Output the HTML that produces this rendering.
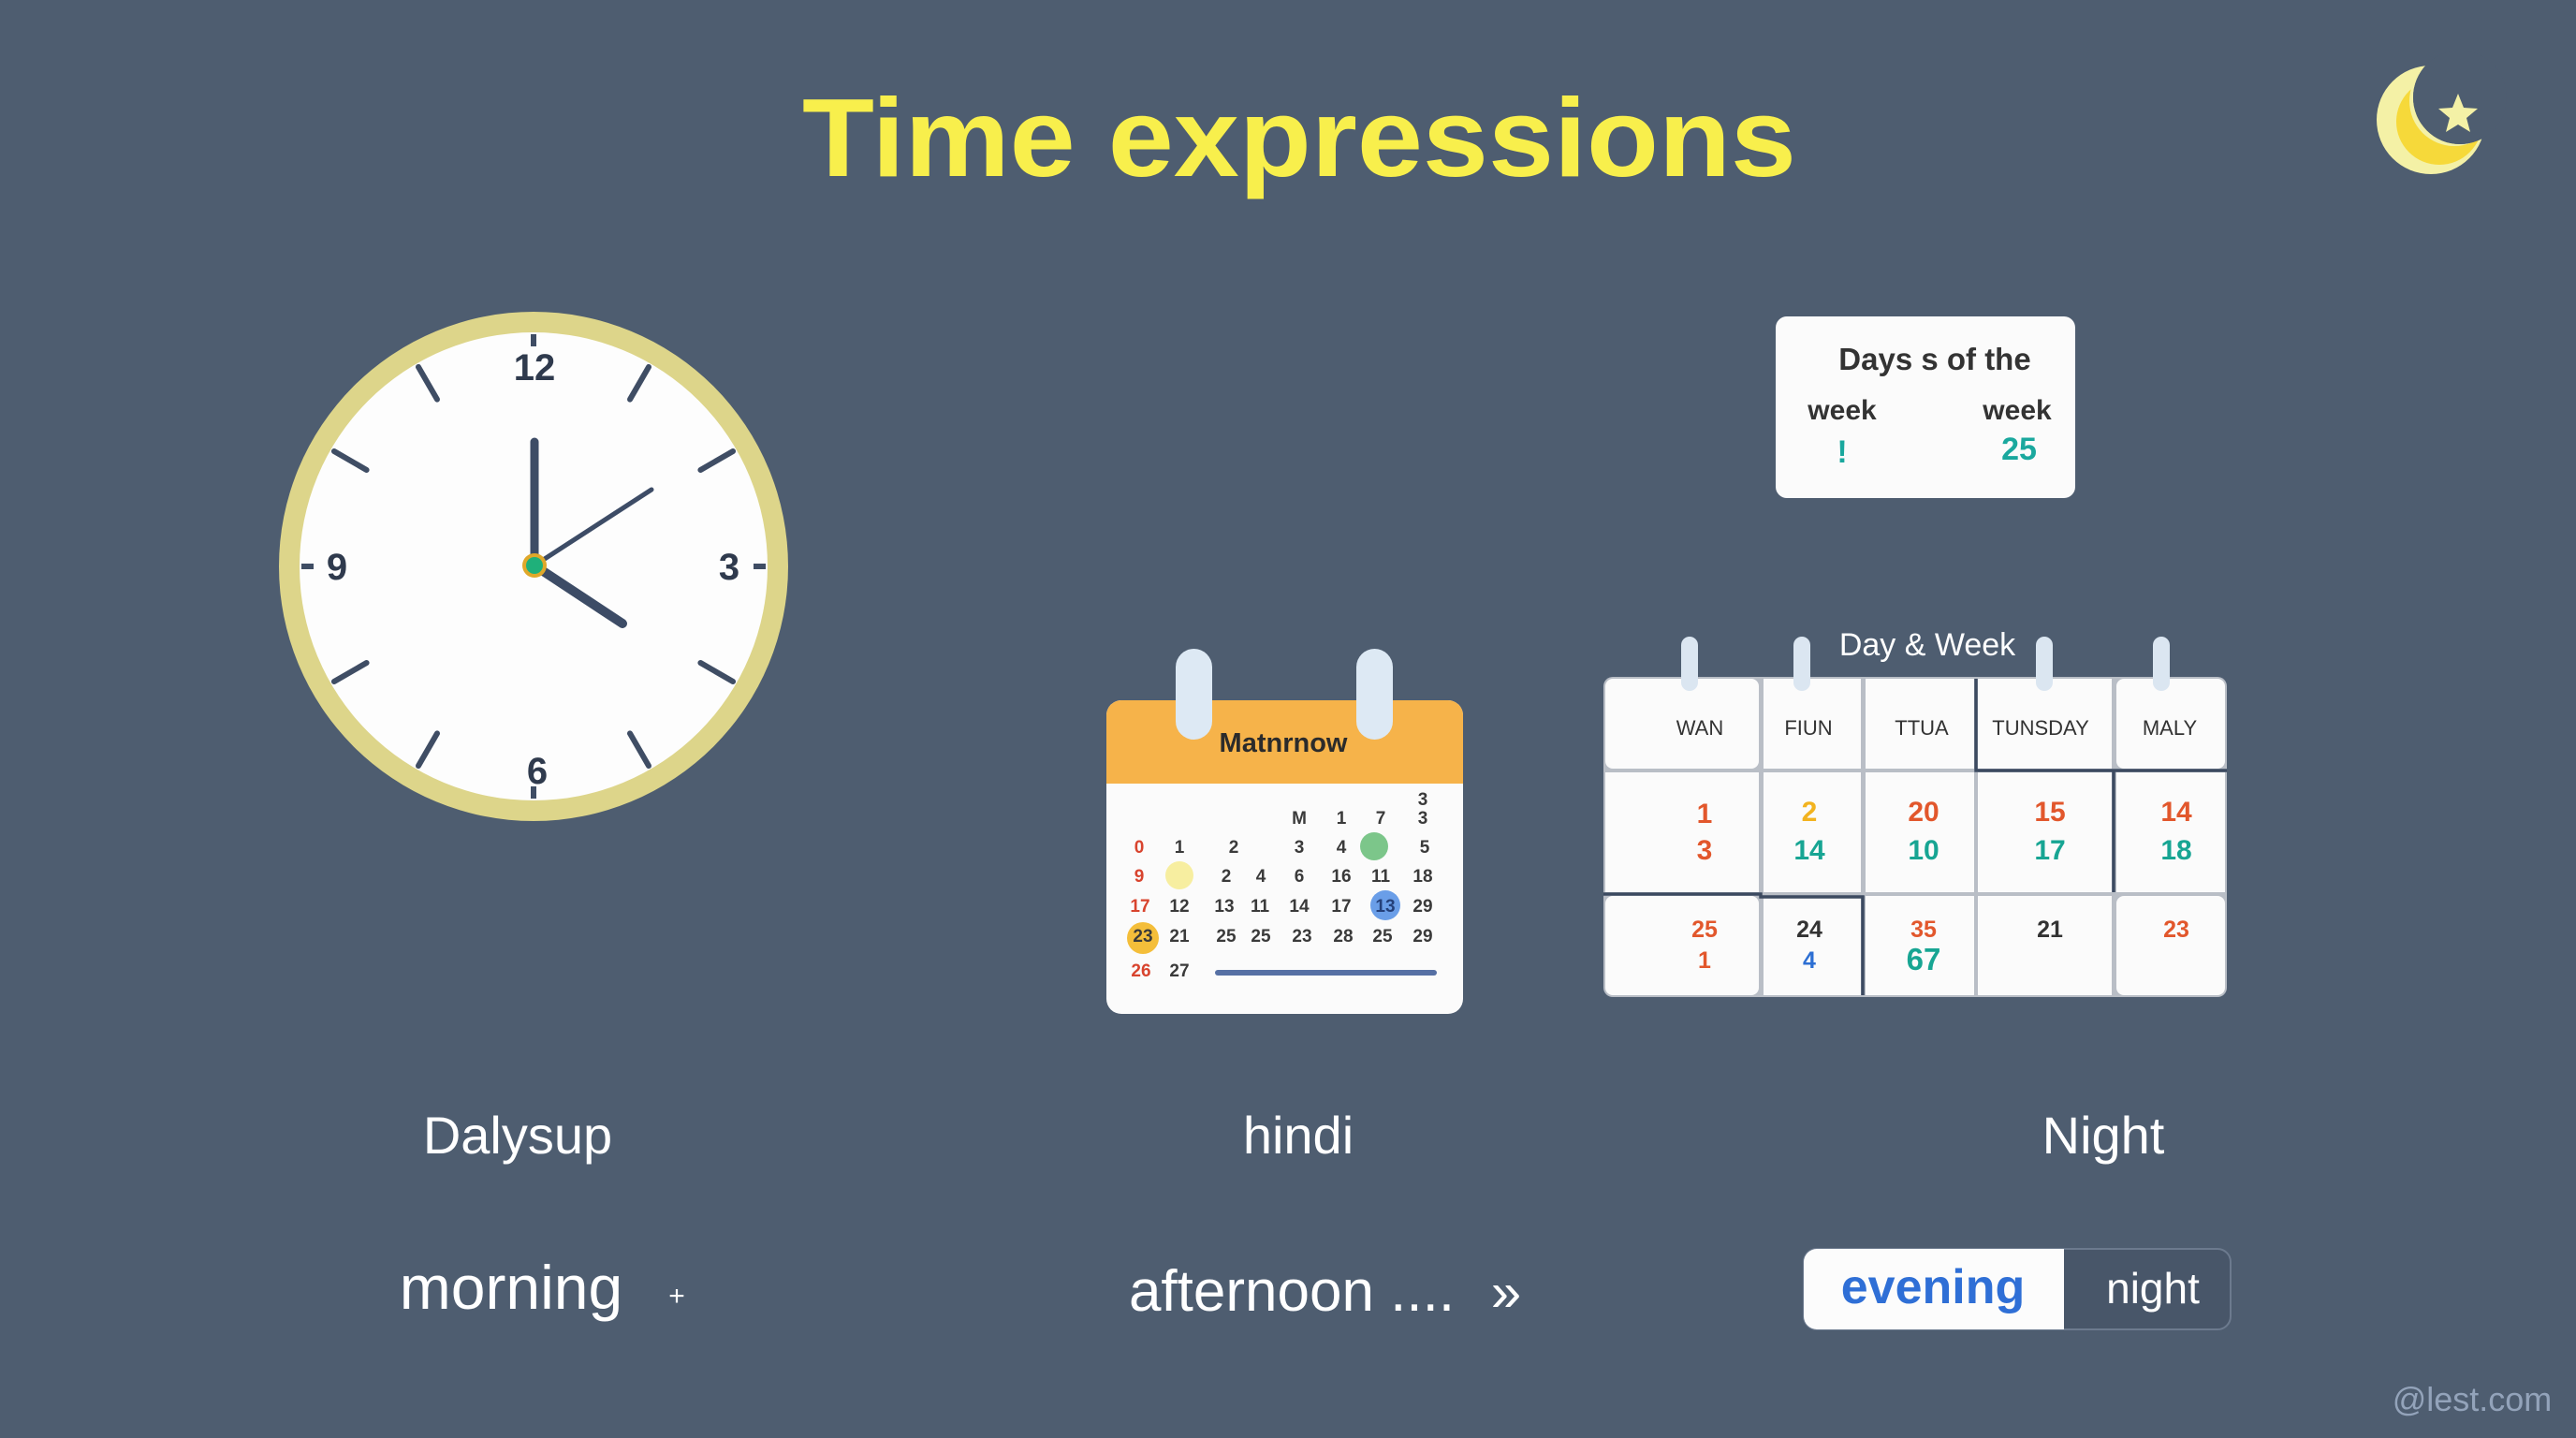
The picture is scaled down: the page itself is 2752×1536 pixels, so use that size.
<!DOCTYPE html>
<html><head><meta charset="utf-8"><style>
html,body{margin:0;padding:0;background:#4e5d70;}
svg{display:block;}
text{font-family:"Liberation Sans",sans-serif;}
</style></head><body>
<svg width="2752" height="1536" viewBox="0 0 2752 1536" xmlns="http://www.w3.org/2000/svg">
<rect width="2752" height="1536" fill="#4e5d70"/>
<!-- Title -->
<text x="857" y="188" font-size="119" font-weight="bold" fill="#f8ef4c" textLength="1062" lengthAdjust="spacingAndGlyphs">Time expressions</text>

<!-- Moon -->
<defs>
<mask id="mm"><rect x="2500" y="40" width="200" height="200" fill="#fff"/><circle cx="2628" cy="104" r="50" fill="#000"/></mask>
<mask id="mm2"><rect x="2500" y="40" width="200" height="200" fill="#fff"/><circle cx="2622" cy="108" r="48" fill="#000"/></mask>
</defs>
<circle cx="2597" cy="128" r="58" fill="#f4f1a6" mask="url(#mm)"/>
<circle cx="2606" cy="130" r="46" fill="#f6d93a" mask="url(#mm2)"/>
<circle cx="2628" cy="104" r="50" fill="#4e5d70"/>
<polygon points="2626,100 2632,115 2647,116 2635,126 2639,141 2626,133 2613,141 2617,126 2605,116 2620,115" fill="#f4f1a6"/>

<!-- Clock -->
<circle cx="570" cy="605" r="272" fill="#ddd58a"/>
<circle cx="570" cy="605" r="250" fill="#fdfdfd"/>
<g stroke="#3f4d64" stroke-width="6">
<line x1="570" y1="357" x2="570" y2="370"/>
<line x1="570" y1="840" x2="570" y2="853"/>
<line x1="322" y1="605" x2="335" y2="605"/>
<line x1="805" y1="605" x2="818" y2="605"/>
</g>
<g stroke="#3f4d64" stroke-width="6" stroke-linecap="round" transform="translate(570 605)">
<line x1="0" y1="-206" x2="0" y2="-246" transform="rotate(30)"/>
<line x1="0" y1="-206" x2="0" y2="-246" transform="rotate(60)"/>
<line x1="0" y1="-206" x2="0" y2="-246" transform="rotate(120)"/>
<line x1="0" y1="-206" x2="0" y2="-246" transform="rotate(150)"/>
<line x1="0" y1="-206" x2="0" y2="-246" transform="rotate(210)"/>
<line x1="0" y1="-206" x2="0" y2="-246" transform="rotate(240)"/>
<line x1="0" y1="-206" x2="0" y2="-246" transform="rotate(300)"/>
<line x1="0" y1="-206" x2="0" y2="-246" transform="rotate(330)"/>
</g>
<g font-size="40" font-weight="bold" fill="#2f3a4d" text-anchor="middle">
<text x="571" y="406">12</text>
<text x="360" y="619">9</text>
<text x="779" y="619">3</text>
<text x="574" y="837">6</text>
</g>
<line x1="571" y1="604" x2="571" y2="472" stroke="#3d4c66" stroke-width="9" stroke-linecap="round"/>
<line x1="571" y1="604" x2="665" y2="666" stroke="#3d4c66" stroke-width="10" stroke-linecap="round"/>
<line x1="571" y1="604" x2="696" y2="523" stroke="#3d4c66" stroke-width="5" stroke-linecap="round"/>
<circle cx="571" cy="604" r="13" fill="#e0a82a"/>
<circle cx="571" cy="604" r="9" fill="#1fb07a"/>

<!-- Calendar 1 -->
<rect x="1182" y="748" width="381" height="335" rx="16" fill="#fbfbfb"/>
<path d="M1182 837 V764 a16 16 0 0 1 16 -16 H1547 a16 16 0 0 1 16 16 V837 Z" fill="#f6b34a"/>
<rect x="1256" y="693" width="39" height="97" rx="19.5" fill="#dde9f4"/>
<rect x="1449" y="693" width="39" height="97" rx="19.5" fill="#dde9f4"/>
<text x="1371" y="803" font-size="29" font-weight="bold" fill="#2b2b2b" text-anchor="middle">Matnrnow</text>
<circle cx="1468" cy="904" r="15" fill="#7cc68a"/>
<circle cx="1260" cy="935" r="15" fill="#f7eea0"/>
<circle cx="1480" cy="967" r="16" fill="#6a9ee8"/>
<circle cx="1221" cy="1002" r="17" fill="#f4be3a"/>
<rect x="1298" y="1036" width="237" height="6" rx="3" fill="#5670a4"/>
<g font-size="19" fill="#3a3a3a" text-anchor="middle" font-weight="bold">
<text x="1520" y="860">3</text>
<text x="1388" y="880">M</text><text x="1433" y="880">1</text><text x="1475" y="880">7</text><text x="1520" y="880">3</text>
<text x="1217" y="911" fill="#d8442e">0</text><text x="1260" y="911">1</text><text x="1318" y="911">2</text><text x="1388" y="911">3</text><text x="1433" y="911">4</text><text x="1522" y="911">5</text>
<text x="1217" y="942" fill="#d8442e">9</text><text x="1310" y="942">2</text><text x="1347" y="942">4</text><text x="1388" y="942">6</text><text x="1433" y="942">16</text><text x="1475" y="942">11</text><text x="1520" y="942">18</text>
<text x="1218" y="974" fill="#d8442e">17</text><text x="1260" y="974">12</text><text x="1308" y="974">13</text><text x="1346" y="974">11</text><text x="1388" y="974">14</text><text x="1433" y="974">17</text><text x="1480" y="974" fill="#24407a">13</text><text x="1520" y="974">29</text>
<text x="1221" y="1006">23</text><text x="1260" y="1006">21</text><text x="1310" y="1006">25</text><text x="1347" y="1006">25</text><text x="1391" y="1006">23</text><text x="1435" y="1006">28</text><text x="1477" y="1006">25</text><text x="1520" y="1006">29</text>
<text x="1219" y="1043" fill="#d8442e">26</text><text x="1260" y="1043">27</text>
</g>

<!-- Days card -->
<rect x="1897" y="338" width="320" height="194" rx="12" fill="#fbfbfb"/>
<text x="2067" y="395" font-size="33" font-weight="bold" fill="#333" text-anchor="middle">Days s of the</text>
<text x="1968" y="448" font-size="30" font-weight="bold" fill="#333" text-anchor="middle">week</text>
<text x="2155" y="448" font-size="30" font-weight="bold" fill="#333" text-anchor="middle">week</text>
<text x="1968" y="494" font-size="34" font-weight="bold" fill="#1aa89e" text-anchor="middle">!</text>
<text x="2157" y="491" font-size="34" font-weight="bold" fill="#1aa89e" text-anchor="middle">25</text>

<!-- Week grid -->
<text x="2059" y="700" font-size="34" fill="#ffffff" text-anchor="middle">Day &amp; Week</text>
<rect x="1713" y="723" width="666" height="342" rx="10" fill="#b9bec6"/>
<g fill="#fbfbfb">
<rect x="1715" y="725" width="164" height="96" rx="8"/>
<rect x="1884" y="725" width="104" height="96"/>
<rect x="1993" y="725" width="116" height="96"/>
<rect x="2113" y="725" width="143" height="96"/>
<rect x="2261" y="725" width="116" height="96" rx="8"/>
<rect x="1715" y="825" width="164" height="128"/>
<rect x="1884" y="825" width="104" height="128"/>
<rect x="1993" y="825" width="116" height="128"/>
<rect x="2113" y="825" width="143" height="128"/>
<rect x="2261" y="825" width="116" height="128"/>
<rect x="1715" y="957" width="164" height="106" rx="8"/>
<rect x="1884" y="957" width="104" height="106"/>
<rect x="1993" y="957" width="116" height="106"/>
<rect x="2113" y="957" width="143" height="106"/>
<rect x="2261" y="957" width="116" height="106" rx="8"/>
</g>
<g stroke="#3c4a60" stroke-width="3.5" fill="none">
<path d="M2111 725 V823 H2379"/>
<path d="M2258 823 V953"/>
<path d="M1713 955 H1881 V958 H1990 V1063"/>
</g>
<g fill="#dbe6f1">
<rect x="1796" y="680" width="18" height="58" rx="9"/>
<rect x="1916" y="680" width="18" height="58" rx="9"/>
<rect x="2175" y="680" width="18" height="58" rx="9"/>
<rect x="2300" y="680" width="18" height="58" rx="9"/>
</g>
<g font-size="22" fill="#333" text-anchor="middle">
<text x="1816" y="785">WAN</text><text x="1932" y="785">FIUN</text><text x="2053" y="785">TTUA</text><text x="2180" y="785">TUNSDAY</text><text x="2318" y="785">MALY</text>
</g>
<g font-size="30" font-weight="bold" text-anchor="middle">
<text x="1821" y="879" fill="#e2572c">1</text><text x="1821" y="918" fill="#e2572c">3</text>
<text x="1933" y="877" fill="#f2b31f">2</text><text x="1933" y="918" fill="#17a593">14</text>
<text x="2055" y="877" fill="#e2572c">20</text><text x="2055" y="918" fill="#17a593">10</text>
<text x="2190" y="877" fill="#e2572c">15</text><text x="2190" y="918" fill="#17a593">17</text>
<text x="2325" y="877" fill="#e2572c">14</text><text x="2325" y="918" fill="#17a593">18</text>
<g font-size="25">
<text x="1821" y="1001" fill="#e2572c">25</text><text x="1821" y="1034" fill="#e2572c">1</text>
<text x="1933" y="1001" fill="#333">24</text><text x="1933" y="1034" fill="#2d6fd3">4</text>
<text x="2055" y="1001" fill="#e2572c">35</text>
<text x="2190" y="1001" fill="#333">21</text>
<text x="2325" y="1001" fill="#e2572c">23</text>
</g>
<text x="2055" y="1036" fill="#17a593" font-size="33">67</text>
</g>

<!-- Labels -->
<g fill="#ffffff" font-size="56" text-anchor="middle">
<text x="553" y="1232">Dalysup</text>
<text x="1387" y="1232">hindi</text>
<text x="2247" y="1232">Night</text>
<text x="546" y="1398" font-size="66">morning</text>
<text x="723" y="1394" font-size="30">+</text>
<text x="1380" y="1400" font-size="62">afternoon ....</text>
<text x="1609" y="1400" font-size="58">»</text>
</g>
<!-- Pill -->
<rect x="1927" y="1334" width="456" height="86" rx="14" fill="#485669" stroke="#6c7a8e" stroke-width="2"/>
<path d="M1941 1334 H2205 V1420 H1941 a14 14 0 0 1 -14 -14 V1348 a14 14 0 0 1 14 -14Z" fill="#fcfcfc"/>
<text x="2065" y="1392" font-size="52" font-weight="bold" fill="#2f6fd6" text-anchor="middle">evening</text>
<text x="2300" y="1392" font-size="46" fill="#ffffff" text-anchor="middle">night</text>

<text x="2641" y="1507" font-size="36" fill="#93a3ba" text-anchor="middle">@lest.com</text>
</svg>
</body></html>
